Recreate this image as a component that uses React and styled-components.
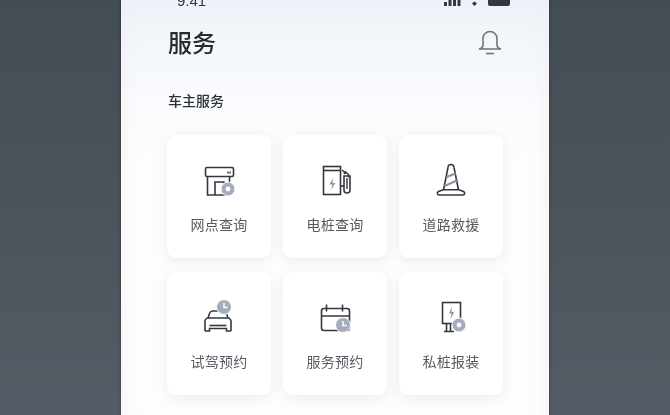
import React from 'react'
import styled, { createGlobalStyle } from 'styled-components'

const Global = createGlobalStyle`
    html, body {
        margin: 0;
        padding: 0;
        height: 100%;
        overflow: hidden;
    }
    #root {
        height: 100%;
    }
`
const Page = styled.div`
    height: 415px;
    overflow: hidden;
    display: flex;
    justify-content: center;
    background: linear-gradient(180deg, #444c54 0%, #4b535b 50%, #545c65 100%);
    font-family: 'Noto Sans CJK SC', 'Liberation Sans', sans-serif;
`
const Phone = styled.div`
    width: 428px;
    height: 440px;
    flex: none;
    box-sizing: border-box;
    margin-top: -10px;
    padding: 0 46px;
    background: linear-gradient(180deg, #ecf1f8 0%, #f4f7fb 14%, #fafbfd 26%, #fdfdfe 40%);
    box-shadow: 0 0 3px rgba(30, 30, 30, 0.6), inset 0 0 18px rgba(236, 237, 240, 0.7);
    filter: blur(0.5px);
`
const StatusBar = styled.div`
    height: 20px;
    display: flex;
    align-items: center;
    justify-content: space-between;
    margin-right: -7px;
    padding-left: 10px;
`
const Time = styled.span`
    font-family: 'Liberation Sans', sans-serif;
    font-size: 15px;
    color: #33383f;
`
const StatusIcons = styled.div`
    display: flex;
    align-items: center;
    gap: 10px;
`
const Header = styled.div`
    display: flex;
    align-items: center;
    justify-content: space-between;
    height: 36px;
    margin-top: 14px;
    padding: 0 1px;
`
const Title = styled.h1`
    margin: 0;
    font-size: 24px;
    line-height: 36px;
    font-weight: 500;
    color: #272b30;
`
const SectionTitle = styled.h2`
    margin: 30px 0 0;
    padding-left: 1px;
    font-size: 14px;
    line-height: 20px;
    font-weight: 500;
    color: #2d3136;
`
const Grid = styled.div`
    display: grid;
    grid-template-columns: repeat(3, 104px);
    grid-auto-rows: 123px;
    column-gap: 12px;
    row-gap: 14px;
    margin-top: 25px;
`
const Card = styled.div`
    display: flex;
    flex-direction: column;
    align-items: center;
    padding-top: 26px;
    box-sizing: border-box;
    background: #ffffff;
    border-radius: 9px;
    box-shadow: 0 3px 12px rgba(70, 85, 110, 0.1);
`
const IconSlot = styled.div`
    width: 40px;
    height: 40px;
    display: flex;
    align-items: center;
    justify-content: center;
`
const Label = styled.span`
    margin-top: 13px;
    font-size: 14px;
    line-height: 20px;
    letter-spacing: 0.2px;
    color: #565a60;
`

const INK = '#34383e'
const BADGE = '#a3adbd'
const MUTED = '#8f959e'

const Svg = ({ children }) => (
    <svg width="40" height="40" viewBox="0 0 40 40" fill="none" stroke={INK} strokeWidth="1.6">
        {children}
    </svg>
)

const GearBadge = ({ cx, cy }) => (
    <g>
        <circle cx={cx} cy={cy} r="7" fill={BADGE} stroke="#fff" strokeWidth="1" />
        <circle cx={cx} cy={cy} r="2.4" fill="#fff" stroke="none" />
    </g>
)

const ClockBadge = ({ cx, cy }) => (
    <g>
        <circle cx={cx} cy={cy} r="7.5" fill={BADGE} stroke="#fff" strokeWidth="1" />
        <path d={`M${cx} ${cy - 4}v4.5h3.5`} stroke="#fff" strokeWidth="1.4" />
    </g>
)

const ShopIcon = () => (
    <Svg>
        <rect x="6.5" y="6.5" width="28" height="9" rx="1.5" />
        <path d="M8.5 15.5v18.500h22v-18.500" />
        <path d="M16 34v-13h9v13" />
        <path d="M28 11.500h4" stroke="#6f757e" strokeWidth="2" />
        <GearBadge cx="29" cy="28" />
    </Svg>
)

const PumpIcon = () => (
    <Svg>
        <rect x="8.500" y="5.500" width="17" height="28" />
        <path d="M8.500 9.500h17" />
        <path d="M18 17l-3.500 6.500h3l-1.500 5.500 4.500-7h-3z" fill={MUTED} stroke="none" />
        <path d="M27 9l4 3.500M29 13l1.500-2 3 2.500v3" />
        <path d="M29 15h6v14a3 3 0 0 1-6 0z" />
        <path d="M32 17v11" strokeWidth="1.400" />
        <path d="M25.500 25h3.500" />
    </Svg>
)

const ConeIcon = () => (
    <Svg>
        <path d="M17 6.500a3 3 0 0 1 6 0" />
        <path d="M17 6.500L12.500 29M23 6.500L27.500 29" />
        <path d="M15.500 16l9-3.500M13.500 25l13.500-6" stroke={MUTED} strokeWidth="2.400" />
        <path d="M8 34a1.800 1.800 0 0 1-1-3.200l5-2h16l5 2a1.800 1.800 0 0 1-1 3.200z" />
    </Svg>
)

const CarIcon = () => (
    <Svg>
        <path d="M9 20l1.500-4.500a3.500 3.500 0 0 1 3-2.500h11a3.500 3.500 0 0 1 3 2.500l1.500 4.500" />
        <path d="M6 33V24a3.500 3.500 0 0 1 3-4h20a3.500 3.500 0 0 1 3 4v9" />
        <path d="M6 33h4.500v-2.500h17V33H32" />
        <path d="M10.500 27.500h17" />
        <ClockBadge cx="25" cy="9" />
    </Svg>
)

const CalendarIcon = () => (
    <Svg>
        <rect x="6.500" y="10.500" width="28" height="22" rx="2.500" />
        <path d="M6.500 18h28M11.500 6.500v7M27.500 6.500v7" />
        <ClockBadge cx="28" cy="27" />
    </Svg>
)

const ChargerIcon = () => (
    <Svg>
        <rect x="11.500" y="4.500" width="18" height="21" />
        <path d="M21 8.500l-3 7h2.500l-1 6 3.500-7.500h-2.500z" fill={MUTED} stroke="none" />
        <path d="M15.500 25.500v7.500M19.500 25.500v7.500M13 33.500h10" />
        <GearBadge cx="28" cy="27" />
    </Svg>
)

const SERVICES = [
    { label: '网点查询', Icon: ShopIcon },
    { label: '电桩查询', Icon: PumpIcon },
    { label: '道路救援', Icon: ConeIcon },
    { label: '试驾预约', Icon: CarIcon },
    { label: '服务预约', Icon: CalendarIcon },
    { label: '私桩报装', Icon: ChargerIcon },
]

const App = () => {
    return (
        <Page>
            <Global />
            <Phone>
                <StatusBar>
                    <Time>9:41</Time>
                    <StatusIcons>
                        <svg width="17" height="11" viewBox="0 0 17 11" fill="#33383f">
                            <rect x="0" y="7" width="3" height="4" />
                            <rect x="4.500" y="5" width="3" height="6" />
                            <rect x="9" y="3" width="3" height="8" />
                            <rect x="13.500" y="1" width="3" height="10" />
                        </svg>
                        <svg width="7" height="11" viewBox="0 0 7 11" fill="#33383f">
                            <path d="M1 8.500l2.500-2 2.500 2-2.500 2.500z" />
                        </svg>
                        <svg width="22" height="11" viewBox="0 0 22 11" fill="#33383f">
                            <rect x="0" y="1" width="22" height="10" rx="2" />
                        </svg>
                    </StatusIcons>
                </StatusBar>
                <Header>
                    <Title>服务</Title>
                    <svg width="24" height="26" viewBox="0 0 24 26" fill="none" stroke="#6f747b" strokeWidth="1.600">
                        <path d="M5 16V9.500a7 7 0 0 1 14 0V16c0 2 2 3.500 4 4H1c2-.5 4-2 4-4z" />
                        <path d="M8 24.500h8" />
                    </svg>
                </Header>
                <SectionTitle>车主服务</SectionTitle>
                <Grid>
                    {SERVICES.map(({ label, Icon }) => (
                        <Card key={label}>
                            <IconSlot>
                                <Icon />
                            </IconSlot>
                            <Label>{label}</Label>
                        </Card>
                    ))}
                </Grid>
            </Phone>
        </Page>
    )
}

export default App
